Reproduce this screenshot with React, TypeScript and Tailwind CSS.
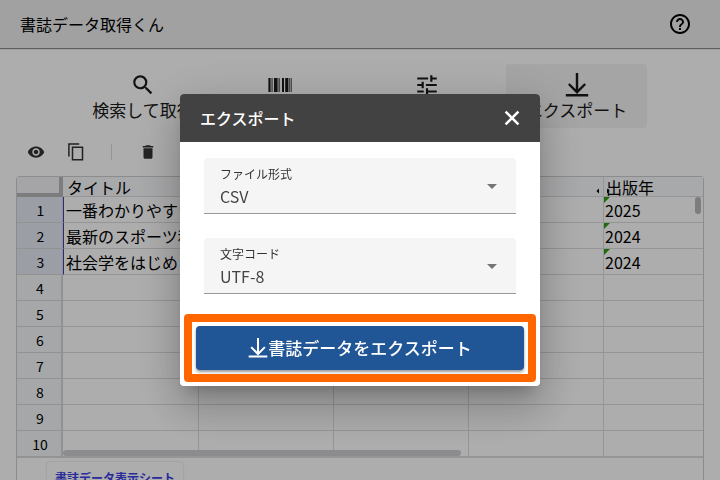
import React, { useState } from 'react';
import {
  MdArrowDropDown,
  MdDelete,
  MdHelpOutline,
  MdSearch,
  MdTune,
  MdVisibility,
} from 'react-icons/md';

interface Row {
  id: number;
  title?: string;
  year?: string;
}

const rows: Row[] = [
  { id: 1, title: '一番わかりやすい', year: '2025' },
  { id: 2, title: '最新のスポーツ科学', year: '2024' },
  { id: 3, title: '社会学をはじめる', year: '2024' },
  { id: 4 },
  { id: 5 },
  { id: 6 },
  { id: 7 },
  { id: 8 },
  { id: 9 },
  { id: 10 },
];

const DownloadIcon = ({ className }: { className?: string }) => (
  <svg
    viewBox="0 0 24 24"
    className={className}
    fill="none"
    stroke="currentColor"
    strokeWidth="2.4"
    aria-hidden="true"
  >
    <path d="M12 0v19M3.8 11 12 19.2l8.2-8.2M.8 22.2h22.4" />
  </svg>
);

const BarcodeIcon = () => (
  <svg viewBox="0 0 24 14" className="w-6 h-3.5" fill="currentColor" aria-hidden="true">
    <path d="M.4 0h2.2v14H.4zM3.6 0h.9v14h-.9zM6 0h3.6v14H6zM10.6 0h1v14h-1zM14 0h2v14h-2zM17.2 0h3.2v14h-3.2zM21.4 0h.8v14h-.8zM22.9 0h.7v14h-.7z" />
  </svg>
);

const CopyIcon = () => (
  <svg
    viewBox="0 0 16 18"
    className="w-4 h-[18px]"
    fill="none"
    stroke="currentColor"
    strokeWidth="1.5"
    aria-hidden="true"
  >
    <path d="M.9 13.5V1h10.3M4.5 4.2h10v12.6h-10z" />
  </svg>
);

const CloseIcon = () => (
  <svg
    viewBox="0 0 24 24"
    className="w-6 h-6"
    fill="none"
    stroke="currentColor"
    strokeWidth="2.6"
    aria-hidden="true"
  >
    <path d="M5.6 5.6l12.8 12.8M18.4 5.6L5.6 18.4" />
  </svg>
);

interface SelectFieldProps {
  id: string;
  label: string;
  value: string;
  options: string[];
  onChange: (value: string) => void;
}

const SelectField = ({ id, label, value, options, onChange }: SelectFieldProps) => (
  <div className="relative h-14 rounded-t bg-[#f5f5f5] border-b border-[#9a9a9a]">
    <label
      htmlFor={id}
      className="absolute left-4 top-2 text-xs leading-4 text-[#333] pointer-events-none"
    >
      {label}
    </label>
    <select
      id={id}
      value={value}
      onChange={(e) => onChange(e.target.value)}
      className="w-full h-full appearance-none bg-transparent pl-4 pr-10 pt-5 text-base text-[#444] outline-none"
    >
      {options.map((option) => (
        <option key={option}>{option}</option>
      ))}
    </select>
    <MdArrowDropDown className="absolute right-3 top-4 w-6 h-6 text-[#757575] pointer-events-none" />
  </div>
);

const ExportDialog = ({ onClose }: { onClose: () => void }) => {
  const [format, setFormat] = useState('CSV');
  const [encoding, setEncoding] = useState('UTF-8');

  return (
    <div className="fixed inset-0 z-10 flex items-center justify-center bg-black/32">
      <div
        role="dialog"
        aria-labelledby="export-title"
        className="w-1/2 min-w-[320px] max-w-[480px] rounded bg-white shadow-[0_11px_15px_-7px_rgba(0,0,0,0.2),0_24px_38px_3px_rgba(0,0,0,0.14),0_9px_46px_8px_rgba(0,0,0,0.12)]"
      >
        <div className="flex items-center justify-between h-12 pl-5 pr-4 rounded-t bg-[#424242] text-white">
          <h2 id="export-title" className="text-base font-medium">
            エクスポート
          </h2>
          <button aria-label="閉じる" onClick={onClose}>
            <CloseIcon />
          </button>
        </div>

        <div className="flex flex-col gap-6 px-6 pt-4">
          <SelectField
            id="format"
            label="ファイル形式"
            value={format}
            options={['CSV', 'TSV']}
            onChange={setFormat}
          />
          <SelectField
            id="encoding"
            label="文字コード"
            value={encoding}
            options={['UTF-8', 'Shift_JIS']}
            onChange={setEncoding}
          />
        </div>

        <div className="px-4 pt-8 pb-4">
          <div className="relative">
            <button className="flex items-center justify-center w-full h-11 rounded bg-[#215696] text-white text-[17px] font-medium shadow-[0_2px_3px_rgba(0,0,0,0.4)]">
              <DownloadIcon className="w-5 h-5" />
              書誌データをエクスポート
            </button>
            <div className="absolute -inset-3 rounded border-8 border-[#ff6600] pointer-events-none" />
          </div>
        </div>
      </div>
    </div>
  );
};

const SheetTable = () => (
  <div className="relative">
    <table className="w-full table-fixed border-separate border-spacing-0 text-base leading-5 text-black">
      <colgroup>
        <col className="w-[46px]" />
        <col className="w-[136px]" />
        <col className="w-[135px]" />
        <col className="w-[135px]" />
        <col className="w-[135px]" />
        <col />
      </colgroup>
      <thead>
        <tr className="h-5 bg-[#f8f9fb] leading-[17px]">
          <th className="h-5 p-0 bg-[#f3f4f6] border-r-4 border-b-4 border-[#b8b8b8]" />
          <th className="h-5 p-0 pt-0.5 pl-1 font-normal text-left border-b border-[#dcdcdc]">
            タイトル
          </th>
          <th className="p-0 border-b border-[#dcdcdc]" />
          <th className="p-0 border-b border-[#dcdcdc]" />
          <th className="p-0 border-b border-r border-[#dcdcdc]" />
          <th className="relative p-0 pt-0.5 pl-0.5 font-normal text-left border-b border-[#dcdcdc]">
            出版年
            <svg
              viewBox="0 0 14 6"
              className="absolute -left-2 bottom-[2px] w-3.5 h-1.5"
              aria-hidden="true"
            >
              <path d="M3 .5v5L.4 3zM11 .5v5L13.6 3z" />
            </svg>
          </th>
        </tr>
      </thead>
      <tbody>
        {rows.map((row) => (
          <tr key={row.id} className="h-[26px]">
            <th
              className={
                row.title
                  ? 'p-0 pl-0.5 text-sm font-normal bg-[#e5e9f4] border-b border-r border-[#d8d8d8]'
                  : 'p-0 pl-0.5 text-sm font-normal bg-[#f5f6f8] border-b border-r-2 border-[#d8d8d8]'
              }
            >
              {row.id}
            </th>
            <td
              className={
                row.title
                  ? 'p-0 pl-0.5 border-b border-r border-l border-[#dcdcdc] border-l-[#3b41c5] whitespace-nowrap'
                  : 'p-0 border-b border-r border-[#dcdcdc]'
              }
            >
              {row.title}
            </td>
            <td className="p-0 border-b border-r border-[#dcdcdc]" />
            <td className="p-0 border-b border-r border-[#dcdcdc]" />
            <td className="p-0 border-b border-r border-[#dcdcdc]" />
            <td className="relative p-0 pl-px border-b border-[#dcdcdc]">
              {row.year}
              {row.year && (
                <svg
                  viewBox="0 0 6 6"
                  className="absolute left-0 top-0 w-1.5 h-1.5 text-[#2f9c12]"
                  fill="currentColor"
                  aria-hidden="true"
                >
                  <path d="M0 0h6L0 6z" />
                </svg>
              )}
            </td>
          </tr>
        ))}
      </tbody>
    </table>
    <div className="absolute right-0.5 top-5 w-1.5 h-[17px] rounded-full bg-[#b8b8bc]" />
    <div className="absolute left-[46px] bottom-px w-[58%] h-1.5 rounded-full bg-[#cfcfd1]" />
  </div>
);

export default function App() {
  const [isExportOpen, setIsExportOpen] = useState(true);

  return (
    <div className="h-screen overflow-hidden bg-white text-black font-['Noto_Sans_CJK_JP',sans-serif]">
      <header className="flex items-center justify-between h-12 px-5 bg-[#ededed] shadow-[0_1px_1px_rgba(0,0,0,0.45)]">
        <h1 className="text-base">書誌データ取得くん</h1>
        <button aria-label="ヘルプ" className="mr-2">
          <MdHelpOutline className="w-6 h-6" />
        </button>
      </header>

      <nav className="flex justify-center pt-4 text-[17px] leading-6 text-[#1a1a1a]">
        <button className="flex flex-col items-center w-[140px] h-16 pt-2">
          <MdSearch className="w-[26px] h-[26px] shrink-0" />
          検索して取得
        </button>
        <button aria-label="バーコード" className="flex flex-col items-center w-[134px] h-16 pt-3.5">
          <BarcodeIcon />
        </button>
        <button aria-label="表示設定" className="flex flex-col items-center w-[159px] h-16 pt-2">
          <MdTune className="w-[26px] h-[26px]" />
        </button>
        <button
          onClick={() => setIsExportOpen(true)}
          className="flex flex-col items-center w-[141px] h-16 pt-2 rounded bg-[#f3f3f3]"
        >
          <DownloadIcon className="w-6 h-6 my-px shrink-0" />
          エクスポート
        </button>
      </nav>

      <div className="flex items-center h-12 px-4 text-[#333]">
        <button aria-label="表示" className="flex justify-center w-10">
          <MdVisibility className="w-[18px] h-[18px]" />
        </button>
        <button aria-label="コピー" className="flex justify-center w-10">
          <CopyIcon />
        </button>
        <div className="w-px h-4 ml-[15px] mr-4 bg-[#dcdcdc]" />
        <button aria-label="削除" className="flex justify-center w-10">
          <MdDelete className="w-[18px] h-[18px]" />
        </button>
      </div>

      <main className="mx-4 rounded-t border border-b-0 border-[#cfcfcf]">
        <SheetTable />
        <div className="flex px-[30px] pt-1 border-t border-[#dcdcdc]">
          <button className="px-2 py-1.5 text-xs leading-5 font-bold text-[#3b41e5] rounded-t shadow-[0_0_2px_rgba(0,0,0,0.2)]">
            書誌データ表示シート
          </button>
        </div>
      </main>

      {isExportOpen && <ExportDialog onClose={() => setIsExportOpen(false)} />}
    </div>
  );
}
